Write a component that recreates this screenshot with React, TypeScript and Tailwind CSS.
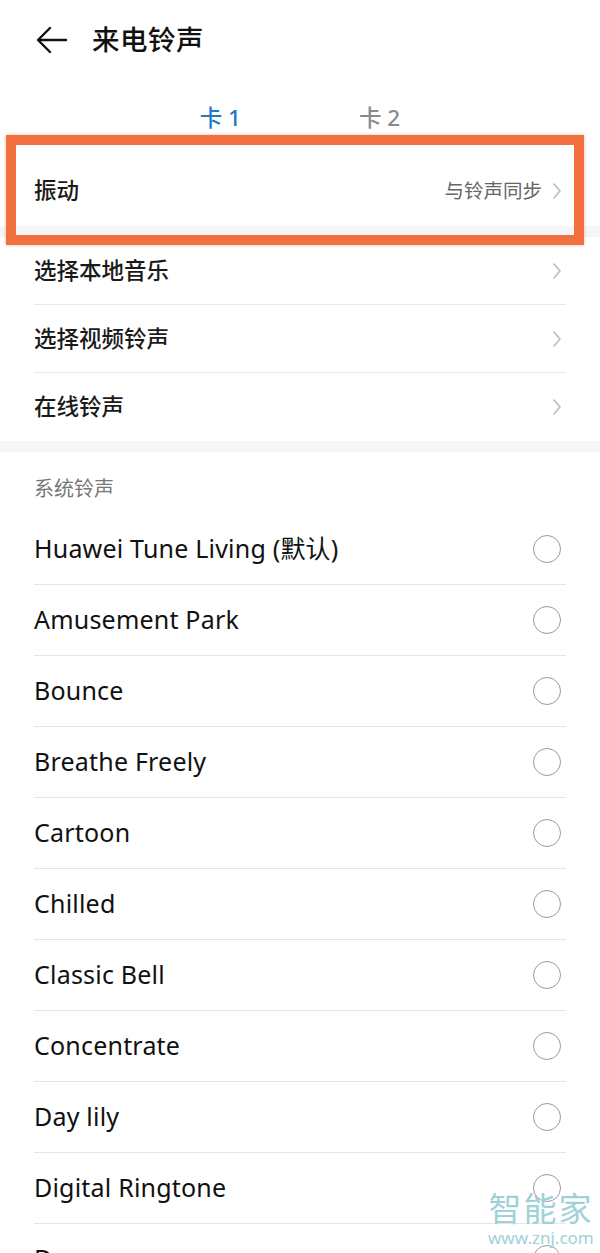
import React from "react";

const cjk = "font-['Noto_Sans','Noto_Sans_CJK_SC',sans-serif]";

const ringtones = [
  "Huawei Tune Living (默认)",
  "Amusement Park",
  "Bounce",
  "Breathe Freely",
  "Cartoon",
  "Chilled",
  "Classic Bell",
  "Concentrate",
  "Day lily",
  "Digital Ringtone",
  "Dawn",
];

function Chevron() {
  return (
    <svg width="10" height="18" viewBox="0 0 10 18" fill="none" className="shrink-0">
      <path d="M2 2l6 7-6 7" stroke="#bdbdbd" strokeWidth="1.6" strokeLinecap="round" strokeLinejoin="round" />
    </svg>
  );
}

function NavRow({ label, value, last }: { label: string; value?: string; last?: boolean }) {
  return (
    <div className="px-[34px]">
      <div className={`flex h-[68px] items-center justify-between ${last ? "" : "border-b border-[#e8e8e8]"}`}>
        <span className="text-[22.5px] font-medium text-[#1a1a1a]">{label}</span>
        <div className="flex items-center gap-[10px] pr-[4px]">
          {value && <span className="text-[19.5px] text-[#666]">{value}</span>}
          <Chevron />
        </div>
      </div>
    </div>
  );
}

export default function App() {
  return (
    <div className={`relative h-[1253px] w-[600px] overflow-hidden bg-white ${cjk}`}>
      {/* header */}
      <div className="flex h-[80px] items-center gap-[24px] pl-[36px]">
        <svg width="32" height="28" viewBox="0 0 32 28" fill="none">
          <path d="M30 14H3M14 2L2 14l12 12" stroke="#111" strokeWidth="2.4" strokeLinecap="round" strokeLinejoin="round" />
        </svg>
        <h1 className="text-[27.5px] font-medium tracking-[0.5px] text-[#111]">来电铃声</h1>
      </div>

      {/* sim tabs */}
      <div className="flex h-[76px] items-center justify-center gap-[118px]">
        <span className="text-[22.5px] font-medium text-[#1f78c8]">卡 1</span>
        <span className="text-[22.5px] font-medium text-[#8a8a8a]">卡 2</span>
      </div>

      <div className="bg-[#f6f6f6]">
        <div className="bg-white">
          <div className="flex h-[70px] items-center justify-between px-[34px]">
            <span className="text-[22.5px] font-medium text-[#1a1a1a]">振动</span>
            <div className="flex items-center gap-[10px] pr-[4px]">
              <span className="text-[19.5px] text-[#666]">与铃声同步</span>
              <Chevron />
            </div>
          </div>
        </div>
        <div className="mt-[11px] bg-white">
          <NavRow label="选择本地音乐" />
          <NavRow label="选择视频铃声" />
          <NavRow label="在线铃声" last />
        </div>
        <div className="mt-[11px] bg-white">
          <div className="flex h-[62px] items-center px-[34px] pt-[12px]">
            <span className="text-[20px] text-[#777]">系统铃声</span>
          </div>
          {ringtones.map((name) => (
            <div key={name} className="px-[34px]">
              <div className="flex h-[71px] items-center justify-between border-b border-[#e6e6e6]">
                <span className="text-[25px] tracking-[0.2px] text-[#111]">{name}</span>
                <span className="mr-[5px] h-[28px] w-[28px] rounded-full border-[1.5px] border-[#9a9a9a]" />
              </div>
            </div>
          ))}
        </div>
      </div>

      {/* highlight frame */}
      <div className="pointer-events-none absolute left-[6px] top-[135px] h-[110px] w-[578px] border-[10px] border-[#f26f40] shadow-[0_0_3px_rgba(242,111,64,0.5)]" />

      {/* watermark */}
      <div className="pointer-events-none absolute left-[488px] top-[1192px] flex flex-col items-center leading-none text-[#9ed2d8]">
        <span className="text-[33px] font-normal tracking-[2px]">智能家</span>
        <span className="mt-[4px] text-[17px]">www.znj.com</span>
      </div>
    </div>
  );
}
